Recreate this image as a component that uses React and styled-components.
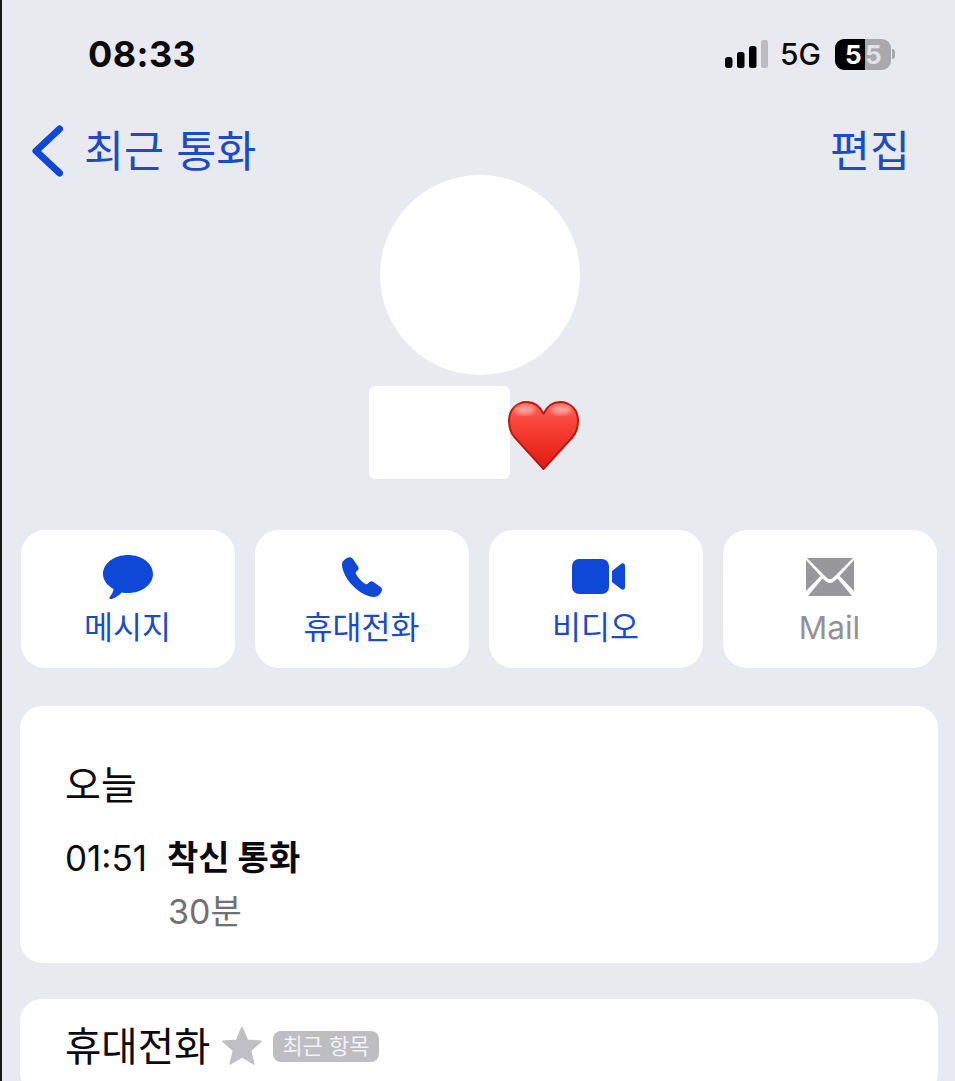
import React from 'react'
import styled, { createGlobalStyle } from 'styled-components'

const BLUE = '#0f47d6'
const TEXT_BLUE = '#1c4bc4'
const KR = `Inter, "Noto Sans CJK KR", sans-serif`

const GlobalStyle = createGlobalStyle`
  html, body {
    margin: 0;
    padding: 0;
    height: 100%;
    background: #e9e9f0;
    overflow: hidden;
  }
`

const Page = styled.div`
  box-sizing: border-box;
  width: 955px;
  height: 1081px;
  overflow: hidden;
  background: #e9e9f0;
  border-left: 2px solid #17171a;
  font-family: ${KR};
  color: #0b0b0d;
`

const StatusBar = styled.div`
  display: flex;
  align-items: center;
  justify-content: space-between;
  height: 40px;
  padding: 34px 60px 0 86px;
`

const Clock = styled.div`
  font-size: 36px;
  font-weight: 700;
  letter-spacing: 0.4px;
`

const StatusRight = styled.div`
  display: flex;
  align-items: center;
`

const Network = styled.span`
  font-size: 30px;
  font-weight: 500;
  margin: 0 14px 0 11px;
`

const Battery = styled.div`
  display: flex;
  width: 56px;
  height: 31px;
  border-radius: 9px;
  overflow: hidden;
  font-size: 26px;
  font-weight: 700;
  line-height: 31px;
`

const BatteryPart = styled.span`
  flex: 0 0 ${p => p.$width}px;
  padding-left: ${p => p.$pad}px;
  box-sizing: border-box;
  background: ${p => p.$bg};
  color: ${p => p.$color};
`

const BatteryCap = styled.span`
  width: 3px;
  height: 10px;
  margin-left: 1px;
  border-radius: 0 3px 3px 0;
  background: #a9a9ad;
`

const NavBar = styled.div`
  display: flex;
  align-items: center;
  justify-content: space-between;
  height: 60px;
  margin-top: 46px;
  padding: 0 45px 0 30px;
`

const BackLink = styled.div`
  display: flex;
  align-items: center;
  gap: 18px;
`

const NavText = styled.span`
  padding-bottom: 4px;
  font-size: 43.5px;
  font-weight: 400;
  color: ${TEXT_BLUE};
  white-space: nowrap;
`

const Profile = styled.div`
  display: flex;
  flex-direction: column;
  align-items: center;
  margin-top: -5px;
`

const Avatar = styled.div`
  width: 200px;
  height: 200px;
  margin-left: 3px;
  border-radius: 50%;
  background: #fff;
`

const NameRow = styled.div`
  display: flex;
  align-items: flex-start;
  margin: 11px 9px 0 0;
`

const NameMask = styled.div`
  width: 141px;
  height: 93px;
  border-radius: 6px;
  background: #fff;
`

const Heart = styled.svg`
  width: 71px;
  height: 71px;
  margin: 14px 0 0 -2px;
`

const Actions = styled.div`
  display: grid;
  grid-template-columns: repeat(4, 214px);
  gap: 20px;
  margin: 51px 0 0 19px;
`

const Action = styled.div`
  display: flex;
  flex-direction: column;
  align-items: center;
  height: 138px;
  border-radius: 24px;
  background: #fff;
`

const ActionIcon = styled.div`
  display: flex;
  align-items: center;
  justify-content: center;
  height: 50px;
  margin-top: 22px;
`

const ActionLabel = styled.span`
  margin: 4px 1px 0 0;
  font-size: 31.5px;
  line-height: 44px;
  color: ${p => (p.$muted ? '#929296' : TEXT_BLUE)};
`

const Card = styled.div`
  box-sizing: border-box;
  width: 918px;
  margin-left: 18px;
  border-radius: 22px;
  background: #fff;
  padding: ${p => p.$padding};
  height: ${p => p.$height}px;
`

const CallCard = styled(Card)`
  margin-top: 38px;
`

const PhoneCard = styled(Card)`
  margin-top: 36px;
  display: flex;
  align-items: center;
`

const DayLabel = styled.div`
  font-size: 39px;
  line-height: 50px;
`

const CallRow = styled.div`
  display: flex;
  margin-top: 26px;
`

const CallTime = styled.div`
  width: 102px;
  font-size: 35px;
  line-height: 44px;
`

const CallType = styled.div`
  font-size: 34px;
  font-weight: 700;
  line-height: 44px;
`

const CallDuration = styled.div`
  margin: 10px 0 0 1px;
  font-size: 34px;
  line-height: 44px;
  color: #707075;
`

const PhoneLabel = styled.span`
  font-size: 39.5px;
  line-height: 50px;
`

const Star = styled.svg`
  width: 42px;
  height: 42px;
  margin: 0 0 2px 11px;
`

const Badge = styled.span`
  margin: 0 0 2px 10px;
  padding: 0 9px;
  height: 31px;
  border-radius: 8px;
  background: #bdbdc2;
  color: #f2f2f5;
  font-size: 22px;
  line-height: 31px;
`

function Signal() {
  return (
    <svg width="44" height="30" viewBox="0 0 44 30">
      <rect x="0" y="18" width="7.5" height="11" rx="3" fill="#000" />
      <rect x="12" y="13" width="7.5" height="16" rx="2.5" fill="#000" />
      <rect x="24" y="7" width="7.5" height="22" rx="2.5" fill="#000" />
      <rect x="36" y="1" width="7" height="28" rx="2.5" fill="#bcbcc0" />
    </svg>
  )
}

export default function App() {
  return (
    <Page>
      <GlobalStyle />
      <StatusBar>
        <Clock>08:33</Clock>
        <StatusRight>
          <Signal />
          <Network>5G</Network>
          <Battery>
            <BatteryPart $width={30} $pad={10} $bg="#000" $color="#fff">5</BatteryPart>
            <BatteryPart $width={26} $pad={0} $bg="#a9a9ad" $color="#e3e3e7">5</BatteryPart>
          </Battery>
          <BatteryCap />
        </StatusRight>
      </StatusBar>

      <NavBar>
        <BackLink>
          <svg width="34" height="54" viewBox="0 0 34 54">
            <path d="M27.5 6 L4 28 L27.5 50" fill="none" stroke={BLUE} strokeWidth="7" strokeLinecap="round" strokeLinejoin="round" />
          </svg>
          <NavText>최근 통화</NavText>
        </BackLink>
        <NavText>편집</NavText>
      </NavBar>

      <Profile>
        <Avatar />
        <NameRow>
          <NameMask />
          <Heart viewBox="0 0 72 72">
            <defs>
              <linearGradient id="heartFill" x1="0" y1="0" x2="0" y2="1">
                <stop offset="0" stopColor="#f8655c" />
                <stop offset="0.3" stopColor="#f9453b" />
                <stop offset="1" stopColor="#e0190f" />
              </linearGradient>
              <filter id="heartGlow">
                <feGaussianBlur stdDeviation="2" />
              </filter>
            </defs>
            <path
              d="M36 70 L6 37 C2.5 32.5 1 27 1 21 C1 10 9 2 19 2 C26.5 2 32.5 6.5 36 14 C39.5 6.5 45.5 2 53 2 C63 2 71 10 71 21 C71 27 69.5 32.5 66 37 Z"
              fill="url(#heartFill)"
              stroke="#b81a12"
              strokeWidth="2"
              strokeLinejoin="round"
            />
            <ellipse cx="17" cy="10" rx="10" ry="4.5" fill="#ffc4bc" opacity="0.7" filter="url(#heartGlow)" />
            <ellipse cx="54" cy="10" rx="10" ry="4.5" fill="#ffc4bc" opacity="0.7" filter="url(#heartGlow)" />
          </Heart>
        </NameRow>
      </Profile>

      <Actions>
        <Action>
          <ActionIcon>
            <svg width="50" height="46" viewBox="0 0 50 46">
              <path
                d="M25 1 C38.8 1 50 9.5 50 20 C50 30.5 38.8 39 25 39 C22.8 39 20.8 38.8 18.8 38.4 C15.5 41.8 10.5 45 7.5 45 C6.3 45 6 44 6.8 43 C8.5 41 10.2 37.8 10.6 35 C4.2 31.6 0 26.2 0 20 C0 9.5 11.2 1 25 1 Z"
                fill={BLUE}
              />
            </svg>
          </ActionIcon>
          <ActionLabel>메시지</ActionLabel>
        </Action>
        <Action>
          <ActionIcon>
            <svg width="41" height="41" viewBox="0 0 41 41">
              <path
                d="M5 1 C7 -0.3 9.5 0 11 2 L16 9.5 C17 11 16.8 12.5 15.5 13.5 L14 15 C13.5 15.6 13.5 16.2 14 17 C16 21 20 25 23.5 27 C24.3 27.4 25 27.3 25.6 26.8 L27.5 25 C28.7 24 30 24 31.5 25 L38.5 30 C40 31 40.5 33 39.5 34.5 C38 37.5 35.5 40 32 40 C18 39.5 1 22 0 8 C-0.2 5 2 2.5 5 1 Z"
                fill={BLUE}
              />
            </svg>
          </ActionIcon>
          <ActionLabel>휴대전화</ActionLabel>
        </Action>
        <Action>
          <ActionIcon>
            <svg width="58" height="36" viewBox="-5 0 58 36">
              <rect x="0" y="0" width="37" height="35" rx="7" fill={BLUE} />
              <path d="M40 12 L49 5 C51 3.6 53 4.5 53 7 L53 28 C53 30.5 51 31.4 49 30 L40 23 Z" fill={BLUE} />
            </svg>
          </ActionIcon>
          <ActionLabel>비디오</ActionLabel>
        </Action>
        <Action>
          <ActionIcon>
            <svg width="48" height="38" viewBox="0 0 48 38">
              <path d="M1 0 H47 L27 20 C25.2 21.6 22.8 21.6 21 20 Z" fill="#98989c" />
              <path d="M0 2 L14.5 18 L0 33 Z" fill="#98989c" />
              <path d="M48 2 L33.5 18 L48 33 Z" fill="#98989c" />
              <path d="M2 38 L16.5 20.5 L19.5 23 C22.5 25.5 25.5 25.5 28.5 23 L31.5 20.5 L46 38 Z" fill="#98989c" />
            </svg>
          </ActionIcon>
          <ActionLabel $muted>Mail</ActionLabel>
        </Action>
      </Actions>

      <CallCard $padding="54px 45px 0" $height={257}>
        <DayLabel>오늘</DayLabel>
        <CallRow>
          <CallTime>01:51</CallTime>
          <div>
            <CallType>착신 통화</CallType>
            <CallDuration>30분</CallDuration>
          </div>
        </CallRow>
      </CallCard>

      <PhoneCard $padding="0 45px" $height={96}>
        <PhoneLabel>휴대전화</PhoneLabel>
        <Star viewBox="0 0 24 24">
          <path
            d="M12 1.5 L15 8.8 L22.8 9.4 L16.8 14.6 L18.7 22.2 L12 18.1 L5.3 22.2 L7.2 14.6 L1.2 9.4 L9 8.8 Z"
            fill="#bfbfc4"
            stroke="#bfbfc4"
            strokeWidth="1"
            strokeLinejoin="round"
          />
        </Star>
        <Badge>최근 항목</Badge>
      </PhoneCard>
    </Page>
  )
}
